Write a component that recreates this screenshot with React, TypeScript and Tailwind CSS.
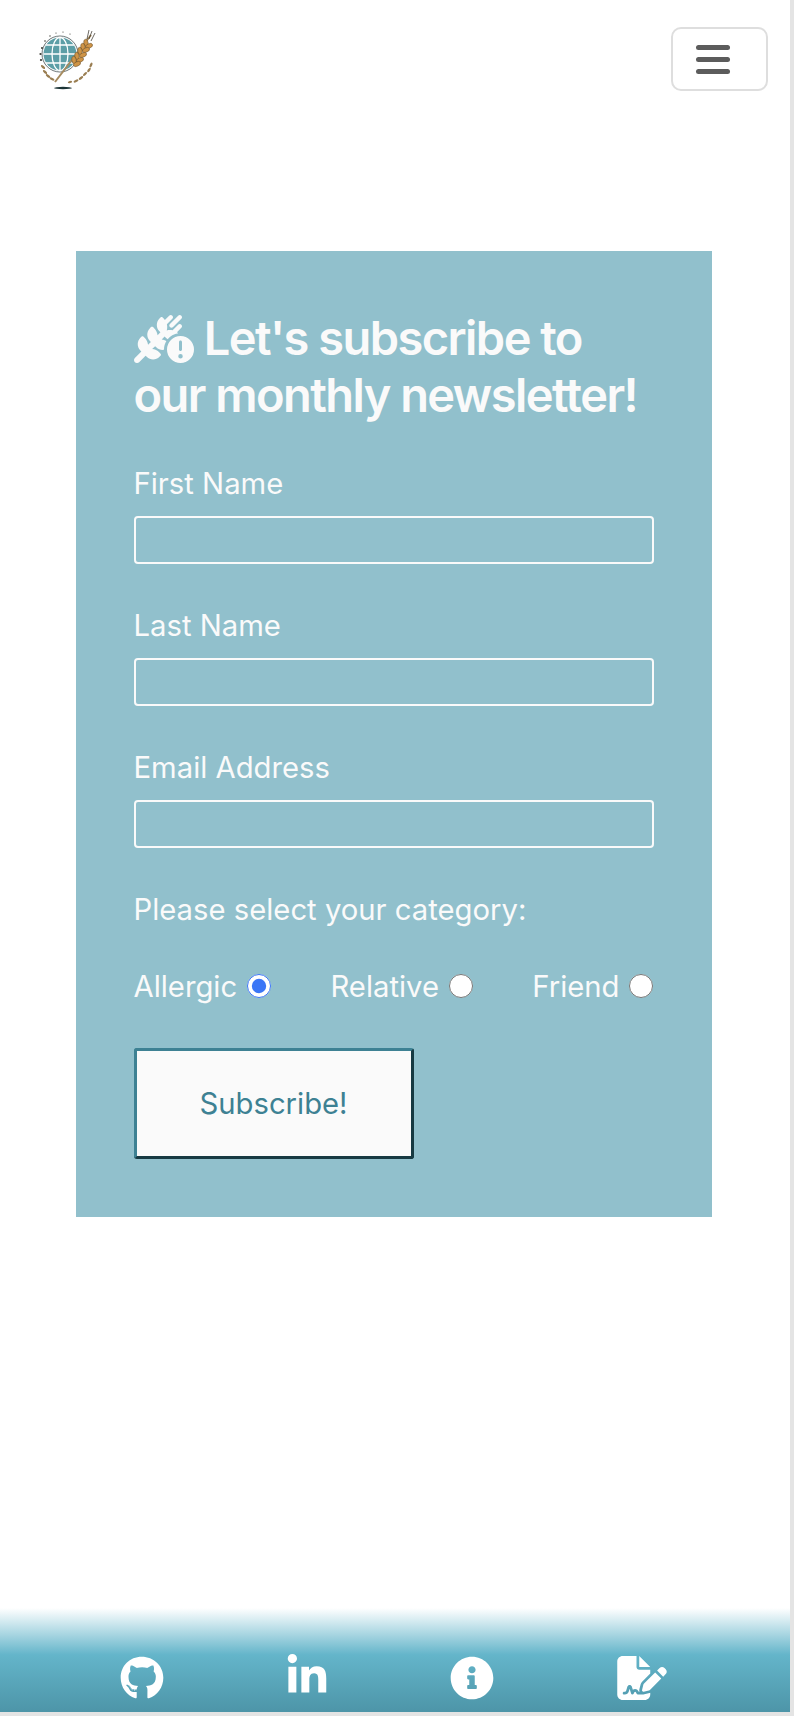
import { FaGithub, FaLinkedinIn, FaInfoCircle } from 'react-icons/fa'
import { FaFileSignature, FaWheatAwnCircleExclamation } from 'react-icons/fa6'

function Grain({ x, y, r, fill = '#cf9446' }: { x: number; y: number; r: number; fill?: string }) {
  return <ellipse cx={x} cy={y} rx="2.2" ry="3.8" fill={fill} stroke="#4a3a20" strokeWidth="0.4" transform={`rotate(${r} ${x} ${y})`} />
}

function Logo() {
  return (
    <svg width="58" height="62" viewBox="0 0 58 62" className="blur-[0.4px] mt-[2px]">
      <ellipse cx="24" cy="59" rx="9" ry="1.2" fill="#1c3436" />
      <circle cx="21" cy="25" r="18" fill="none" stroke="#2e3b3d" strokeWidth="0.7" />
      <circle cx="21" cy="25" r="16.5" fill="#5c9ea6" />
      <g fill="none" stroke="#fff" strokeWidth="1.3">
        <ellipse cx="21" cy="25" rx="8" ry="16.5" />
        <path d="M21 8.5v33M4.5 25h33M7 16h28M7 34h28" />
      </g>
      <path d="M16 53 L52 6" stroke="#a58a5e" strokeWidth="2" />
      <path d="M48 10 L50 1M50 10 L53 2M52 12 L56 4" stroke="#2e2a20" strokeWidth="0.7" />
      <Grain x={47} y={14} r={-10} />
      <Grain x={44} y={18} r={-10} />
      <Grain x={41} y={22} r={-10} />
      <Grain x={38} y={27} r={-10} />
      <Grain x={35} y={31} r={-10} />
      <Grain x={50} y={17} r={65} />
      <Grain x={47} y={21} r={65} />
      <Grain x={44} y={26} r={65} />
      <Grain x={41} y={31} r={65} />
      <Grain x={38} y={35} r={65} />
      <g fill="#9a7e52">
        <ellipse cx="4" cy="38" rx="2.6" ry="1.2" transform="rotate(40 4 38)" />
        <ellipse cx="6" cy="43" rx="2.6" ry="1.2" transform="rotate(40 6 43)" />
        <ellipse cx="9" cy="47" rx="2.6" ry="1.2" transform="rotate(35 9 47)" />
        <ellipse cx="13" cy="50" rx="2.6" ry="1.2" transform="rotate(25 13 50)" />
        <ellipse cx="52" cy="36" rx="2.6" ry="1.2" transform="rotate(-65 52 36)" />
        <ellipse cx="50" cy="41" rx="2.6" ry="1.2" transform="rotate(-55 50 41)" />
        <ellipse cx="46" cy="45" rx="2.6" ry="1.2" transform="rotate(-45 46 45)" />
        <ellipse cx="42" cy="49" rx="2.6" ry="1.2" transform="rotate(-35 42 49)" />
        <ellipse cx="37" cy="52" rx="2.6" ry="1.2" transform="rotate(-25 37 52)" />
        <ellipse cx="31" cy="53" rx="2.2" ry="1.1" transform="rotate(-15 31 53)" />
      </g>
      <g fill="#3a3a32">
        <circle cx="2" cy="31" r="1.1" /><circle cx="1.5" cy="25" r="1.1" /><circle cx="3" cy="19" r="1" />
        <circle cx="6" cy="12" r="0.8" /><circle cx="11" cy="7" r="0.7" /><circle cx="17" cy="4" r="0.6" /><circle cx="24" cy="3" r="0.6" /><circle cx="31" cy="5" r="0.6" />
      </g>
    </svg>
  )
}

function Field({ label }: { label: string }) {
  return (
    <div className="mb-[40px]">
      <label className="block text-[29.25px] font-[430] leading-[44px] mb-[10px] text-[#fafafa]">{label}</label>
      <input type="text" className="block w-full h-[48px] bg-transparent border-2 border-[#fafafa] rounded-[4px]" />
    </div>
  )
}

function Radio({ label, checked }: { label: string; checked?: boolean }) {
  return (
    <label className="flex items-center gap-[10px] text-[29.25px] font-[430] leading-[44px] text-[#fafafa]">
      {label}
      <input type="radio" name="category" defaultChecked={checked} className="w-[24px] h-[24px] m-0 accent-[#3b76f6] -translate-y-[1px]" />
    </label>
  )
}

export default function App() {
  return (
    <div className="w-[794px] h-[1716px] bg-[#e4e4e4] overflow-hidden font-['Inter',sans-serif]">
      <div className="w-[790px] h-[1712px] bg-white flex flex-col">
        <nav className="h-[122px] flex justify-between items-start pt-[27px] pl-[39px] pr-[22px]">
          <Logo />
          <button className="w-[97px] h-[64px] border-2 border-[#dedede] rounded-[10px] flex items-center justify-center pr-[13px] bg-white">
            <span className="flex flex-col gap-[7px]">
              <span className="block w-[34px] h-[5px] rounded bg-[#5c5c5c]" />
              <span className="block w-[34px] h-[5px] rounded bg-[#5c5c5c]" />
              <span className="block w-[34px] h-[5px] rounded bg-[#5c5c5c]" />
            </span>
          </button>
        </nav>
        <main className="flex-1 pt-[129px] pl-[75.5px]">
          <form className="w-[636px] h-[966px] bg-[#91c0cc] px-[58px] pt-[58px]">
            <h1 className="text-[47px] leading-[57px] tracking-[-1.55px] font-[560] text-[#fafafa] mb-[39px]">
              <FaWheatAwnCircleExclamation className="inline-block w-[60px] h-[48px] align-[-8px]" /> Let's subscribe to our monthly newsletter!
            </h1>
            <Field label="First Name" />
            <Field label="Last Name" />
            <Field label="Email Address" />
            <p className="text-[29.25px] font-[430] leading-[44px] text-[#fafafa] mb-[33px]">Please select your category:</p>
            <div className="flex justify-between mb-[39px]">
              <Radio label="Allergic" checked />
              <Radio label="Relative" />
              <Radio label="Friend" />
            </div>
            <button type="button" className="w-[280px] h-[111px] bg-[#fafafa] border-[3px] border-t-[#3d8193] border-l-[#3d8193] border-r-[#173a42] border-b-[#173a42] rounded-[3px] text-[#3d8193] text-[29.25px] font-[430]">
              Subscribe!
            </button>
          </form>
        </main>
        <footer className="h-[104px] bg-[linear-gradient(to_bottom,#ffffff_0%,#64b5ca_45%,#4d95a8_100%)] flex items-end gap-[121px] pl-[120px] pb-[12px] text-white">
          <FaGithub className="w-[44px] h-[44px]" />
          <FaLinkedinIn className="w-[44px] h-[44px] -translate-y-[2px]" />
          <FaInfoCircle className="w-[44px] h-[44px]" />
          <FaFileSignature className="w-[50px] h-[44px] ml-[2px]" />
        </footer>
      </div>
    </div>
  )
}
